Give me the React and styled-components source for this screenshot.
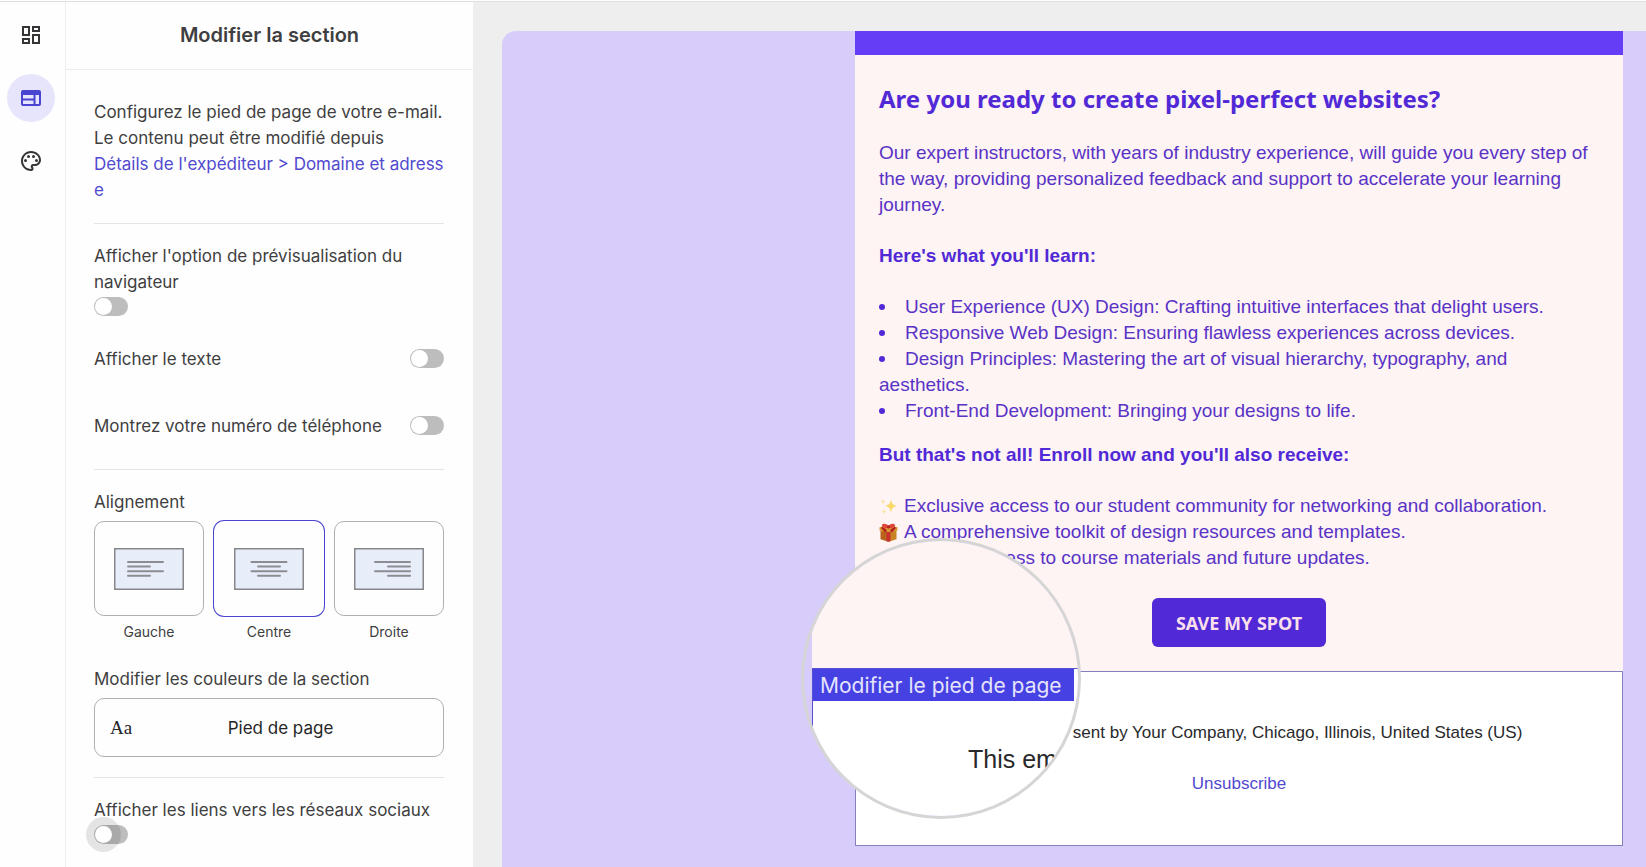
import React, { useState } from 'react';
import styled, { createGlobalStyle, css } from 'styled-components'
import { MdOutlineDashboard, MdOutlineWeb, MdOutlinePalette } from 'react-icons/md'

const theme = {
  text: '#3f3f41',
  accent: '#4a45d1',
  link: '#5149cf',
  line: '#e4e4e5',
  border: '#b0b0b3',
  email: '#5229d6',
  emailText: '#5932c6',
  lavender: '#d8ccfa',
  blush: '#fdf4f3',
  ui: 'Inter, "Liberation Sans", sans-serif',
  arial: '"Liberation Sans", Arial, sans-serif',
  tahoma: 'Tahoma, "Noto Sans", "DejaVu Sans", sans-serif',
}

const GlobalStyle = createGlobalStyle`
  * {
    box-sizing: border-box;
  }

  body {
    margin: 0;
    background: #fefefe;
    color: ${theme.text};
    font-family: ${theme.ui};
  }

  p, h1, h2, h3, ul {
    margin: 0;
    padding: 0;
  }

  a {
    text-decoration: none;
  }
`

const Page = styled.div`
  min-height: 100vh;
  display: flex;
  flex-direction: column;
`

const TopLine = styled.div`
  height: 2px;
  border-bottom: 1px solid #dfdfe0;
`

const Shell = styled.div`
  flex: 1;
  display: grid;
  grid-template-columns: 66px 407px minmax(0, 1fr);
`

const Rail = styled.nav`
  padding: 9px 0 0 7px;
  border-right: 1px solid #ededee;

  display: flex;
  flex-direction: column;
  gap: 15px;
`

const RailButton = styled.button`
  width: 48px;
  height: 48px;
  padding: 0;
  border: none;
  border-radius: 50%;
  background: ${({ $active }) => ($active ? '#e6e5fb' : 'transparent')};
  color: ${({ $active }) => ($active ? theme.accent : '#353537')};
  font-size: 24px;

  display: flex;
  align-items: center;
  justify-content: center;
`

const Panel = styled.aside`
  display: flex;
  flex-direction: column;
`

const PanelHeader = styled.header`
  height: 68px;
  padding-bottom: 2px;
  border-bottom: 1px solid #ededee;

  display: flex;
  align-items: center;
  justify-content: center;
`

const PanelTitle = styled.h1`
  font-size: 20px;
  font-weight: 600;
  line-height: 26px;
`

const PanelBody = styled.div`
  padding: 29px 29px 0 28px;
  font-size: 17px;
  line-height: 26px;
`

const Intro = styled.p`
  padding-bottom: 20px;
`

const PanelLink = styled.a`
  display: block;
  color: ${theme.link};
  word-break: break-all;
`

const Section = styled.section`
  padding: 19px 0 ${({ $bottom }) => $bottom || 20}px;
  border-top: 1px solid ${theme.line};
`

const ToggleRow = styled.div`
  min-height: 67px;

  display: flex;
  align-items: center;
  justify-content: space-between;
  ${({ $stacked }) => $stacked && css`
    min-height: 0;
    margin-bottom: 9px;
    flex-direction: column;
    align-items: flex-start;
    gap: 2px;
  `}
`

const Switch = styled.input`
  appearance: none;
  position: relative;
  width: 34px;
  height: 19px;
  margin: 0;
  border-radius: 10px;
  background: #bdbdbe;

  &::before {
    content: '';
    position: absolute;
    top: 1px;
    left: 1px;
    z-index: 1;
    width: 17px;
    height: 17px;
    border-radius: 50%;
    background: #fff;
  }

  &:checked {
    background: ${theme.accent};
  }

  &:checked::before {
    left: 16px;
  }

  ${({ $halo }) => $halo && css`
    &::after {
      content: '';
      position: absolute;
      top: -8px;
      left: -8px;
      width: 35px;
      height: 35px;
      border-radius: 50%;
      background: rgba(0, 0, 0, 0.1);
    }
  `}
`

const GroupLabel = styled.h2`
  margin-bottom: 6px;
  font-size: 17px;
  font-weight: 400;
  line-height: 26px;
`

const Options = styled.div`
  margin-bottom: 24px;

  display: grid;
  grid-template-columns: repeat(3, 1fr);
  gap: 10px;
`

const Option = styled.label`
  font-size: 14px;
  line-height: 20px;
  text-align: center;

  display: flex;
  flex-direction: column;
  gap: 6px;
`

const OptionBox = styled.span`
  height: 95px;
  border: 1px solid ${theme.border};
  border-radius: 10px;

  display: grid;
  place-items: center;
`

const OptionRadio = styled.input`
  appearance: none;
  position: absolute;
  margin: 0;

  &:checked + ${OptionBox} {
    border-color: transparent;
    box-shadow: 0 0 0 1px ${theme.accent};
  }
`

const ColorButton = styled.button`
  width: 100%;
  height: 59px;
  padding: 0 15px 0 14px;
  border: 1px solid ${theme.border};
  border-radius: 10px;
  background: transparent;
  color: #262628;
  font-family: ${theme.ui};
  font-size: 17px;

  display: grid;
  grid-template-columns: 24px 1fr;
  align-items: center;
`

const Sample = styled.span`
  font-family: "Liberation Serif", serif;
  font-size: 19px;
`

const Canvas = styled.main`
  padding: 29px 0 0 29px;
  background: #eeeeee;

  display: flex;
`

const Preview = styled.div`
  flex: 1;
  padding: 0 23px 21px;
  border-top-left-radius: 14px;
  background: ${theme.lavender};

  display: flex;
  justify-content: flex-end;
`

const Email = styled.article`
  width: 768px;
  font-family: ${theme.arial};
`

const EmailBody = styled.div`
  padding: 24px;
  border-top: 24px solid #663df6;
  background: ${theme.blush};
  color: ${theme.emailText};
  font-size: 19px;
  line-height: 26px;
`

const EmailTitle = styled.h2`
  margin-bottom: 21px;
  color: ${theme.email};
  font-family: ${theme.tahoma};
  font-size: 24px;
  font-weight: 700;
  line-height: 40px;
`

const EmailSubtitle = styled.h3`
  margin: ${({ $tight }) => ($tight ? 18 : 25)}px 0 25px;
  color: ${theme.email};
  font-size: 19px;
  line-height: 26px;
`

const Lessons = styled.ul`
  list-style: none;
`

const Lesson = styled.li`
  &::before {
    content: '';
    display: inline-block;
    width: 6px;
    height: 6px;
    margin-right: 20px;
    border-radius: 50%;
    background: ${theme.email};
    vertical-align: 3px;
  }
`

const Perk = styled.li`
  display: flex;
  align-items: center;
  gap: 6px;
`

const Cta = styled.button`
  height: 49px;
  margin: 27px auto 0;
  padding: 0 24px;
  border: none;
  border-radius: 6px;
  background: ${theme.email};
  color: #fbe0ec;
  font-family: ${theme.tahoma};
  font-size: 18px;
  font-weight: 700;

  display: block;
`

const Footer = styled.footer`
  position: relative;
  height: 175px;
  border: 1px solid #8580bd;
  background: #fff;
  color: #29292b;
  font-size: 17px;
  line-height: 24px;
  text-align: center;

  display: flex;
  flex-direction: column;
  align-items: center;
  justify-content: center;
  gap: 27px;
`

const Unsubscribe = styled.a`
  color: ${theme.link};
`

// the lens lies over the top left corner of the footer
const Lens = styled.div`
  position: absolute;
  top: -134px;
  left: -55px;
  width: 280px;
  height: 281px;
  padding-left: 8px;
  border: 3px solid #d5d5d6;
  border-radius: 50%;
  background: ${theme.lavender};
  text-align: left;
  overflow: hidden;

  display: grid;
  grid-template-rows: 127px 1fr;
`

const LensBody = styled.div`
  background: ${theme.blush};
`

const LensFooter = styled.div`
  border: solid #5751cf;
  border-width: 1px 0 0 1px;
  background: #fff;
`

const LensBadge = styled.span`
  width: 261px;
  height: 32px;
  padding-left: 7px;
  background: #4541e3;
  color: #e6e4fc;
  font-family: ${theme.ui};
  font-size: 21px;
  line-height: 33px;
  white-space: nowrap;

  display: block;
`

const LensText = styled.p`
  padding: 42px 0 0 155px;
  font-size: 25px;
  line-height: 32px;
  white-space: nowrap;
`

function AlignIcon({ align }) {
  const widths = [37, 24, 37, 24]
  const start = (w) => {
    if (align === 'left') return 13
    if (align === 'right') return 57 - w
    return 35 - w / 2
  }

  return (
    <svg width='70' height='42' viewBox='0 0 70 42' aria-hidden='true'>
      <rect x='0.75' y='0.75' width='68.5' height='40.5' fill='#e7eefa' stroke='#87878b' strokeWidth='1.5' />
      {widths.map((w, ind) => (
        <rect key={`line_${ind}`} x={start(w)} y={13 + ind * 4.6} width={w} height='2' rx='1' fill='#8c8c91' />
      ))}
    </svg>
  )
}

function Sparkles() {
  return (
    <svg width='19' height='19' viewBox='0 0 19 19' aria-hidden='true'>
      <path d='M12 2c.6 4.4 1.900 6 6 7-4.100 1-5.400 2.600-6 7-.6-4.400-1.900-6-6-7 4.100-1 5.400-2.600 6-7z' fill='#f9d86c' />
      <path d='M4 1.500c.3 2 .9 2.700 2.500 3.100C4.900 5 4.300 5.700 4 7.700 3.700 5.700 3.100 5 1.500 4.600 3.100 4.200 3.700 3.500 4 1.500z' fill='#fbe3a0' />
      <path d='M5 11.500c.3 2 .9 2.700 2.500 3.100-1.600.4-2.200 1.100-2.500 3.100-.3-2-.9-2.700-2.500-3.100 1.600-.4 2.200-1.100 2.500-3.100z' fill='#fbe3a0' />
    </svg>
  )
}

function Gift() {
  return (
    <svg width='19' height='19' viewBox='0 0 19 19' aria-hidden='true'>
      <path d='M1.500 6.500 9.500 8v10.800l-8-2.500z' fill='#b8621b' />
      <path d='M17.500 6.500 9.500 8v10.800l8-2.500z' fill='#c98222' />
      <path d='M.5 4.300 9.500 2l9 2.300v3.300l-9 2.300-9-2.300z' fill='#d99a35' />
      <path d='M7.500 9h4v9.200l-2 .6-2-.6z' fill='#c9302c' />
      <path d='M3.200 3.800 7.500 6.500v2.900L5.600 8.900 2 5zM15.800 3.800l-4.300 2.700v2.900l1.900-.5L17 5z' fill='#b3211f' />
      <path d='M9.500 4.600C6.500 5.500 2.800 4.600 2.900 2.400 3-.1 7.800.2 9.500 3c1.700-2.800 6.500-3.100 6.600-.6.1 2.200-3.600 3.100-6.600 2.200z' fill='#e0453c' />
      <circle cx='9.500' cy='4' r='1.600' fill='#b3211f' />
    </svg>
  )
}

function Infinity() {
  return (
    <svg width='19' height='19' viewBox='0 0 19 19' aria-hidden='true'>
      <path d='M9.500 9.500C7 5.500 2 5.500 2 9.500s5 4 7.500 0 7.500-4 7.500 0-5 4-7.500 0z' fill='none' stroke='#5932c6' strokeWidth='2' />
    </svg>
  )
}

const railItems = [
  { name: 'Blocs', Icon: MdOutlineDashboard },
  { name: 'Section', Icon: MdOutlineWeb, active: true },
  { name: 'Styles', Icon: MdOutlinePalette },
]

const alignments = [
  { value: 'left', name: 'Gauche' },
  { value: 'center', name: 'Centre' },
  { value: 'right', name: 'Droite' },
]

const lessons = [
  'User Experience (UX) Design: Crafting intuitive interfaces that delight users.',
  'Responsive Web Design: Ensuring flawless experiences across devices.',
  'Design Principles: Mastering the art of visual hierarchy, typography, and aesthetics.',
  'Front-End Development: Bringing your designs to life.',
]

const perks = [
  { Icon: Sparkles, text: 'Exclusive access to our student community for networking and collaboration.' },
  { Icon: Gift, text: 'A comprehensive toolkit of design resources and templates.' },
  { Icon: Infinity, text: 'Lifetime access to course materials and future updates.' },
]

function Toggle({ id, label, stacked, halo }) {
  return (
    <ToggleRow $stacked={stacked}>
      <label htmlFor={id}>{label}</label>
      <Switch id={id} type='checkbox' role='switch' $halo={halo} />
    </ToggleRow>
  )
}

function Settings() {
  const [align, setAlign] = useState('center')

  return (
    <Panel>
      <PanelHeader>
        <PanelTitle>Modifier la section</PanelTitle>
      </PanelHeader>
      <PanelBody>
        <Intro>
          Configurez le pied de page de votre e-mail. Le contenu peut être modifié depuis
          <PanelLink href='#domaine'>Détails de l'expéditeur &gt; Domaine et adresse</PanelLink>
        </Intro>
        <Section $bottom={10}>
          <Toggle id='preview' label="Afficher l'option de prévisualisation du navigateur" stacked />
          <Toggle id='text' label='Afficher le texte' />
          <Toggle id='phone' label='Montrez votre numéro de téléphone' />
        </Section>
        <Section>
          <GroupLabel>Alignement</GroupLabel>
          <Options role='radiogroup' aria-label='Alignement'>
            {alignments.map(({ value, name }) => (
              <Option key={value}>
                <OptionRadio type='radio' name='align' checked={align === value} onChange={() => setAlign(value)} />
                <OptionBox><AlignIcon align={value} /></OptionBox>
                {name}
              </Option>
            ))}
          </Options>
          <GroupLabel>Modifier les couleurs de la section</GroupLabel>
          <ColorButton type='button'>
            <Sample>Aa</Sample>
            <span>Pied de page</span>
          </ColorButton>
        </Section>
        <Section>
          <Toggle id='social' label='Afficher les liens vers les réseaux sociaux' stacked halo />
        </Section>
      </PanelBody>
    </Panel>
  )
}

function App() {
  return (
    <Page>
      <GlobalStyle />
      <TopLine />
      <Shell>
        <Rail>
          {railItems.map(({ name, Icon, active }) => (
            <RailButton key={name} type='button' aria-label={name} $active={active}><Icon /></RailButton>
          ))}
        </Rail>
        <Settings />
        <Canvas>
          <Preview>
            <Email>
              <EmailBody>
                <EmailTitle>Are you ready to create pixel-perfect websites?</EmailTitle>
                <p>
                  Our expert instructors, with years of industry experience, will guide you every step of the way,
                  providing personalized feedback and support to accelerate your learning journey.
                </p>
                <EmailSubtitle>Here's what you'll learn:</EmailSubtitle>
                <Lessons>
                  {lessons.map((text, ind) => <Lesson key={`lesson_${ind}`}>{text}</Lesson>)}
                </Lessons>
                <EmailSubtitle $tight>But that's not all! Enroll now and you'll also receive:</EmailSubtitle>
                <Lessons>
                  {perks.map(({ Icon, text }, ind) => <Perk key={`perk_${ind}`}><Icon />{text}</Perk>)}
                </Lessons>
                <Cta type='button'>SAVE MY SPOT</Cta>
              </EmailBody>
              <Footer>
                <p>This email was sent by Your Company, Chicago, Illinois, United States (US)</p>
                <Unsubscribe href='#unsubscribe'>Unsubscribe</Unsubscribe>
                <Lens>
                  <LensBody />
                  <LensFooter>
                    <LensBadge>Modifier le pied de page</LensBadge>
                    <LensText>This em</LensText>
                  </LensFooter>
                </Lens>
              </Footer>
            </Email>
          </Preview>
        </Canvas>
      </Shell>
    </Page>
  )
}

export default App
